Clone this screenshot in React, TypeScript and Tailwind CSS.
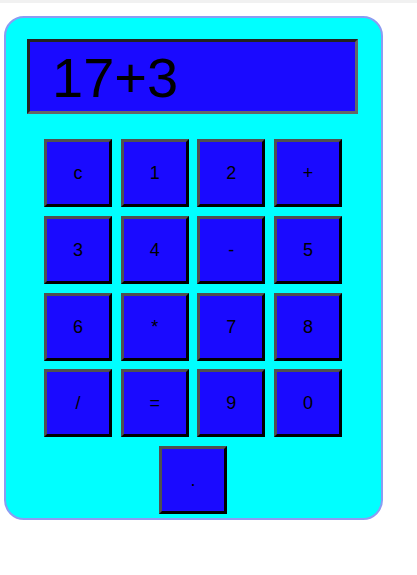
import React from "react";

const keys = ["c", "1", "2", "+", "3", "4", "-", "5", "6", "*", "7", "8", "/", "=", "9", "0", "."];

export default function App() {
  return (
    <div className="w-[417px] h-[575px] bg-white" style={{ fontFamily: '"Liberation Sans", Arial, sans-serif' }}>
      <div className="h-[3px] bg-[#f1f1f1]" />
      <div className="ml-[4px] mt-[13px] w-[379px] h-[504px] rounded-[20px] border-2 border-[#8c9cf2] bg-[#00ffff] flex flex-col">
        <div className="ml-[21px] mt-[21px] w-[331px] h-[75px] border-[3px] border-t-[#222222] border-l-[#222222] border-r-[#666666] border-b-[#666666] bg-[#1a0aff] flex items-center pl-[22px]">
          <span className="text-[56px] leading-none text-black mt-[2px]">17+3</span>
        </div>
        <div className="ml-[38px] mt-[25px] w-[298px] flex flex-wrap justify-center gap-x-[8.67px] gap-y-[8.75px]">
          {keys.map((k) => (
            <button
              key={k}
              className="w-[68px] h-[68px] border-[3px] border-t-[#505050] border-l-[#505050] border-r-black border-b-black bg-[#1a0aff] text-black text-[18px] leading-none flex items-center justify-center"
            >
              {k}
            </button>
          ))}
        </div>
      </div>
    </div>
  );
}
